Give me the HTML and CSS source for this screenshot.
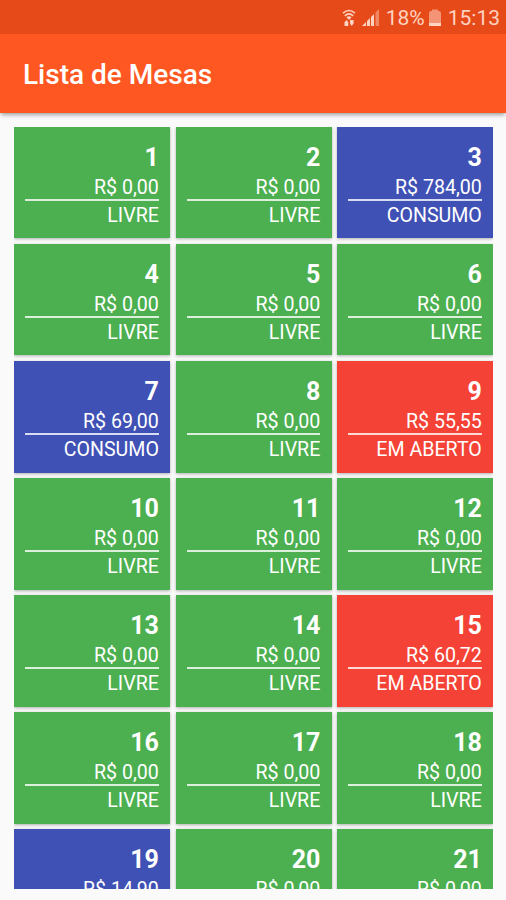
FILE: index.html
```html
<!DOCTYPE html>
<html lang="pt-BR">
<head>
    <meta charset="UTF-8">
    <meta name="viewport" content="width=device-width, initial-scale=1.0">
    <title>Lista de Mesas</title>
    <link rel="stylesheet" href="styles.css">
</head>
<body>
    <div class="status-bar">
        <svg class="icon-wifi" width="14" height="18" viewBox="0 0 14 18">
            <path d="M1 4.2Q7-1.2 13 4.2M2.8 6.8Q7 3 11.2 6.8" fill="none" stroke="currentColor" stroke-width="1.6"/>
            <path d="M4.4 8.2Q7 6.4 9.6 8.2L7 11z" fill="currentColor"/>
            <path d="M2.5 13.2L4.5 11 6.3 13.2V17H2.5zM8 11H11.6V14.6L9.8 17 8 14.6z" fill="currentColor"/>
        </svg>
        <svg class="icon-signal" width="18" height="18" viewBox="0 0 18 18">
            <path d="M0 17L4 13V17zM5 12L8 9V17H5zM9 8L12 5V17H9z" fill="currentColor"/>
            <path d="M13.5 3.5L17 0V17H13.5z" fill="currentColor" opacity="0.45"/>
        </svg>
        <span class="percent">18%</span>
        <svg class="icon-battery" width="12" height="18" viewBox="0 0 12 18">
            <path d="M3 0.5h6v1.5h1q2 0 2 2V14H0V4q0-2 2-2h1z" fill="currentColor" opacity="0.55"/>
            <path d="M0 14h12v3H0z" fill="currentColor"/>
        </svg>
        <span class="clock">15:13</span>
    </div>

    <header class="toolbar">
        <h1>Lista de Mesas</h1>
    </header>

    <main class="mesas">
        <div class="mesa livre">
            <h2>1</h2>
            <p class="valor">R$ 0,00</p>
            <p class="situacao">LIVRE</p>
        </div>
        <div class="mesa livre">
            <h2>2</h2>
            <p class="valor">R$ 0,00</p>
            <p class="situacao">LIVRE</p>
        </div>
        <div class="mesa consumo">
            <h2>3</h2>
            <p class="valor">R$ 784,00</p>
            <p class="situacao">CONSUMO</p>
        </div>
        <div class="mesa livre">
            <h2>4</h2>
            <p class="valor">R$ 0,00</p>
            <p class="situacao">LIVRE</p>
        </div>
        <div class="mesa livre">
            <h2>5</h2>
            <p class="valor">R$ 0,00</p>
            <p class="situacao">LIVRE</p>
        </div>
        <div class="mesa livre">
            <h2>6</h2>
            <p class="valor">R$ 0,00</p>
            <p class="situacao">LIVRE</p>
        </div>
        <div class="mesa consumo">
            <h2>7</h2>
            <p class="valor">R$ 69,00</p>
            <p class="situacao">CONSUMO</p>
        </div>
        <div class="mesa livre">
            <h2>8</h2>
            <p class="valor">R$ 0,00</p>
            <p class="situacao">LIVRE</p>
        </div>
        <div class="mesa aberto">
            <h2>9</h2>
            <p class="valor">R$ 55,55</p>
            <p class="situacao">EM ABERTO</p>
        </div>
        <div class="mesa livre">
            <h2>10</h2>
            <p class="valor">R$ 0,00</p>
            <p class="situacao">LIVRE</p>
        </div>
        <div class="mesa livre">
            <h2>11</h2>
            <p class="valor">R$ 0,00</p>
            <p class="situacao">LIVRE</p>
        </div>
        <div class="mesa livre">
            <h2>12</h2>
            <p class="valor">R$ 0,00</p>
            <p class="situacao">LIVRE</p>
        </div>
        <div class="mesa livre">
            <h2>13</h2>
            <p class="valor">R$ 0,00</p>
            <p class="situacao">LIVRE</p>
        </div>
        <div class="mesa livre">
            <h2>14</h2>
            <p class="valor">R$ 0,00</p>
            <p class="situacao">LIVRE</p>
        </div>
        <div class="mesa aberto">
            <h2>15</h2>
            <p class="valor">R$ 60,72</p>
            <p class="situacao">EM ABERTO</p>
        </div>
        <div class="mesa livre">
            <h2>16</h2>
            <p class="valor">R$ 0,00</p>
            <p class="situacao">LIVRE</p>
        </div>
        <div class="mesa livre">
            <h2>17</h2>
            <p class="valor">R$ 0,00</p>
            <p class="situacao">LIVRE</p>
        </div>
        <div class="mesa livre">
            <h2>18</h2>
            <p class="valor">R$ 0,00</p>
            <p class="situacao">LIVRE</p>
        </div>
        <div class="mesa consumo">
            <h2>19</h2>
            <p class="valor">R$ 14,90</p>
            <p class="situacao">CONSUMO</p>
        </div>
        <div class="mesa livre">
            <h2>20</h2>
            <p class="valor">R$ 0,00</p>
            <p class="situacao">LIVRE</p>
        </div>
        <div class="mesa livre">
            <h2>21</h2>
            <p class="valor">R$ 0,00</p>
            <p class="situacao">LIVRE</p>
        </div>
    </main>
</body>
</html>
```
FILE: styles.css
```css
* {
    box-sizing: border-box;
}
body {
    font-family: Roboto, "Liberation Sans", sans-serif;
    margin: 0;
    height: 900px;
    overflow: hidden;
    background-color: #fafafa;
    color: white;
}
.status-bar {
    display: flex;
    align-items: center;
    justify-content: flex-end;
    height: 34px;
    padding: 2px 6px 0 0;
    background-color: #e64a19;
    color: #ffd2c2;
    font-size: 21px;
    line-height: 32px;
}
.icon-wifi {
    margin-right: 6px;
}
.icon-signal {
    margin-right: 6px;
}
.icon-battery {
    margin: 0 7px 0 4px;
}
.toolbar {
    display: flex;
    align-items: center;
    height: 79px;
    padding: 3px 23px 0;
    background-color: #ff5722;
    box-shadow: 0 3px 4px -1px rgba(0,0,0,0.35);
}
.toolbar h1 {
    margin: 0;
    font-size: 28px;
    font-weight: 500;
    line-height: 32px;
}
.mesas {
    display: grid;
    grid-template-columns: repeat(3, 1fr);
    grid-auto-rows: 111.4px;
    gap: 5.7px;
    height: 762px;
    margin: 14px 13px 0 14.3px;
    overflow: hidden;
}
.mesa {
    padding: 15px 11.2px 0;
    text-align: right;
    box-shadow: 0 1px 3px rgba(0,0,0,0.3);
}
.mesa h2 {
    margin: 0;
    font-size: 25px;
    font-weight: bold;
    line-height: 31px;
}
.mesa p {
    margin: 0;
    font-size: 19.6px;
}
.mesa .valor {
    height: 28px;
    line-height: 30px;
    border-bottom: 2px solid rgba(255,255,255,0.8);
}
.mesa .situacao {
    line-height: 30px;
}
.livre {
    background-color: #4caf50;
}
.consumo {
    background-color: #3f51b5;
}
.aberto {
    background-color: #f44336;
}
```
